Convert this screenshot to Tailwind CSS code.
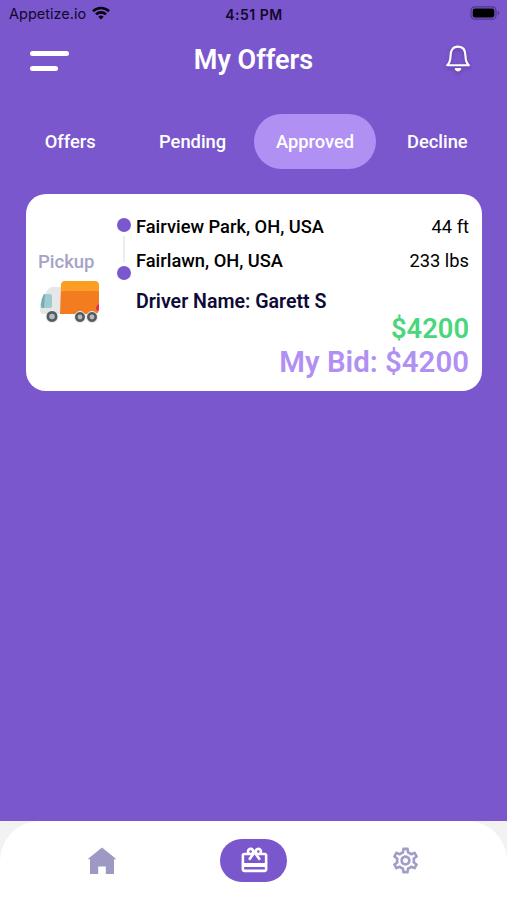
<!DOCTYPE html>
<html lang="en">
<head>
  <meta charset="UTF-8" />
  <meta name="viewport" content="width=device-width, initial-scale=1.0"/>
  <title>My Offers</title>
  <script src="https://cdn.jsdelivr.net/npm/@tailwindcss/browser@4"></script>
</head>
<body class="bg-[#7b57ce] font-['Roboto',sans-serif]">
  <div class="w-[507px] h-[900px] flex flex-col overflow-hidden">

    <!-- Status bar -->
    <div class="h-7 shrink-0 grid grid-cols-3 items-center pl-[8px] pr-[7px] font-['Inter',sans-serif] text-[#10082a] text-sm">
      <div class="flex items-center gap-[6px] pl-px">
        <span class="text-[14.5px]">Appetize.io</span>
        <svg class="w-[18px] h-[14px] -mt-0.5" viewBox="0 0 18 14" fill="none" stroke="#08040f" stroke-width="2.6">
          <path d="M1 5.2a11.5 11.5 0 0 1 16 0"/>
          <path d="M4 8.4a7.2 7.2 0 0 1 10 0"/>
          <path d="M9 13.4 6.3 10.7a3.9 3.9 0 0 1 5.4 0z" fill="#08040f" stroke="none"/>
        </svg>
      </div>
      <span class="text-center font-semibold text-[14px] tracking-[0.5px] pt-px">4:51 PM</span>
      <svg class="w-[30px] h-[14px] justify-self-end -mt-0.5" viewBox="0 0 30 14">
        <rect x="1" y="0.8" width="25" height="12.4" rx="3.8" fill="none" stroke="#4f3789" stroke-width="1.2"/>
        <rect x="2.7" y="2.5" width="21.6" height="9" rx="2.2" fill="#000"/>
        <path d="M27.7 4.8v4.4q1.6-.7 1.6-2.2t-1.6-2.2z" fill="#4f3789"/>
      </svg>
    </div>

    <!-- Header -->
    <header class="h-[64px] shrink-0 flex items-center justify-between pl-[30px] pr-[34px] text-white">
      <div class="w-10 flex flex-col gap-[10px] pt-[2px]">
        <span class="w-[39px] h-[5px] rounded-full bg-white"></span>
        <span class="w-[28px] h-[5px] rounded-full bg-white"></span>
      </div>
      <h1 class="mr-[6px] text-[27px] font-semibold leading-8">My Offers</h1>
      <svg class="w-[30px] h-[32px] -mt-1 drop-shadow-[0_2px_2px_rgba(0,0,0,0.25)]" viewBox="0 0 30 32" fill="none" stroke="#fff" stroke-width="2.1" stroke-linejoin="round" stroke-linecap="round">
        <path d="M4.2 23.3c2.6-2.6 3.3-4.5 3.3-9.3 0-6 2.7-9.4 7.5-9.4s7.5 3.4 7.5 9.4c0 4.8.7 6.7 3.3 9.3z"/>
        <path d="M12.8 27.1q2.2 2.7 4.4 0z" fill="#fff"/>
      </svg>
    </header>

    <!-- Tabs -->
    <nav class="mt-[22px] h-[55px] shrink-0 flex items-stretch pl-[9px] text-white text-[18.3px] font-medium">
      <a class="w-[122.4px] flex items-center justify-center">Offers</a>
      <a class="w-[122.4px] flex items-center justify-center">Pending</a>
      <a class="w-[122.4px] flex items-center justify-center rounded-full bg-[#b190f4]">Approved</a>
      <a class="w-[122.4px] flex items-center justify-center">Decline</a>
    </nav>

    <!-- Offer card -->
    <section class="mt-[25px] ml-[26px] w-[456px] h-[197px] shrink-0 flex rounded-[20px] bg-white pr-[13px] text-black text-[18.3px]">
      <div class="w-[90px] pl-3 pt-[56px]">
        <p class="text-[#a5a3c9] text-[18.5px] font-medium leading-6">Pickup</p>
        <svg class="mt-[7px] ml-[2px] w-[60px] h-[42px]" viewBox="0 0 60 42">
          <path d="M7 10q2-4 6-4h8v27H3q-3 0-3-4v-6z" fill="#e6e7e8"/>
          <path d="M4 13h6q2 0 2 2v10q0 2-2 2H2q-1 0-1-3 0-6 3-11z" fill="#9fcbd0"/>
          <path d="M5 13h-1q-3 5-3 11 0 3 1 3h2z" fill="#72aeb5"/>
          <path d="M21 5q0-5 5-5h28q5 0 5 5v23q0 5-5 5H20z" fill="#f47c20"/>
          <path d="M21 5q0-5 5-5h28q5 0 5 5v6q0-1-4-1H25q-4 0-4 1z" fill="#fb9e24"/>
          <path d="M59 23v5q0 1-1 2-2-.5-2-3t3-4z" fill="#e52b4f"/>
          <g fill="#515c62" stroke="#f2f2f2" stroke-width="1">
            <circle cx="12" cy="35.5" r="6"/>
            <circle cx="40" cy="36" r="5.5"/>
            <circle cx="52" cy="36" r="5.5"/>
          </g>
          <g fill="#b9b9b9">
            <circle cx="12" cy="35.5" r="2.8"/>
            <circle cx="40" cy="36" r="2.4"/>
            <circle cx="52" cy="36" r="2.4"/>
          </g>
        </svg>
      </div>
      <div class="w-[20px] flex flex-col items-start pt-[24px] pl-px">
        <span class="w-[14px] h-[14px] rounded-full bg-[#7b57ce]"></span>
        <span class="my-[4px] ml-[6px] w-[1.5px] h-[26px] bg-[#ececf0]"></span>
        <span class="w-[14px] h-[14px] rounded-full bg-[#7b57ce]"></span>
      </div>
      <div class="flex-1 flex flex-col pt-[21px]">
        <div class="flex justify-between leading-6">
          <span class="font-medium">Fairview Park, OH, USA</span>
          <span>44 ft</span>
        </div>
        <div class="mt-[10px] flex justify-between leading-6">
          <span class="font-medium">Fairlawn, OH, USA</span>
          <span>233 lbs</span>
        </div>
        <p class="mt-[17px] font-semibold leading-6 text-[19.6px] text-[#0d0a35]">Driver Name: Garett S</p>
        <p class="text-right text-[27.3px] leading-[33px] font-semibold text-[#49d67c] -mt-px">$4200</p>
        <p class="text-right text-[29.4px] leading-[33px] font-semibold text-[#b190f4]">My Bid: $4200</p>
      </div>
    </section>

    <!-- Bottom navigation -->
    <div class="mt-auto shrink-0 bg-[#f2f2f2]">
      <footer class="h-[79px] flex items-center justify-center rounded-t-[40px] bg-white">
        <a class="w-[152px] flex justify-center">
          <svg class="w-[30px] h-[28px]" viewBox="0 0 30 28" fill="#9c9ac4">
            <path d="M15 .5 29.5 12.200H27V27h-8.200v-7.500h-7.600V27H3V12.200H.5z"/>
          </svg>
        </a>
        <a class="w-[152px] flex justify-center">
          <span class="w-[67px] h-[43px] rounded-full bg-[#7b57ce] flex items-center justify-center">
            <svg class="w-[31px] h-[31px] ml-px" viewBox="0 0 24 24" fill="#fff">
              <path d="M20 6h-2.180c.11-.31.18-.65.18-1 0-1.660-1.340-3-3-3-1.050 0-1.960.54-2.500 1.350l-.5.67-.5-.68C10.960 2.540 10.050 2 9 2 7.340 2 6 3.340 6 5c0 .35.07.69.18 1H4c-1.110 0-1.990.89-1.990 2L2 19c0 1.110.89 2 2 2h16c1.110 0 2-.89 2-2V8c0-1.110-.89-2-2-2zm-5-2c.55 0 1 .45 1 1s-.45 1-1 1-1-.45-1-1 .45-1 1-1zM9 4c.55 0 1 .45 1 1s-.45 1-1 1-1-.45-1-1 .45-1 1-1zm11 15H4v-2h16v2zm0-5H4V8h5.080L7 10.830 8.620 12 11 8.760l1-1.360 1 1.360L15.380 12 17 10.830 14.920 8H20v6z"/>
            </svg>
          </span>
        </a>
        <a class="w-[152px] flex justify-center">
          <svg class="w-[31px] h-[31px]" viewBox="0 0 24 24" fill="#a09ec6">
            <path d="M19.430 12.980c.04-.32.07-.64.07-.98 0-.34-.03-.66-.07-.98l2.110-1.650c.19-.15.24-.42.12-.64l-2-3.460c-.09-.16-.26-.25-.44-.25-.06 0-.12.01-.17.03l-2.490 1c-.52-.4-1.080-.73-1.690-.98l-.38-2.650C14.460 2.180 14.250 2 14 2h-4c-.25 0-.46.18-.49.42l-.38 2.650c-.61.25-1.170.59-1.690.98l-2.490-1c-.06-.02-.12-.03-.18-.03-.17 0-.34.09-.43.25l-2 3.460c-.13.22-.07.49.12.64l2.110 1.650c-.04.32-.07.65-.07.98 0 .33.03.66.07.98l-2.110 1.650c-.19.15-.24.42-.12.64l2 3.460c.09.16.26.25.44.25.06 0 .12-.01.17-.03l2.490-1c.52.4 1.080.73 1.690.98l.38 2.650c.03.24.24.42.49.42h4c.25 0 .46-.18.49-.42l.38-2.650c.61-.25 1.170-.59 1.690-.98l2.490 1c.06.02.12.03.18.03.17 0 .34-.09.43-.25l2-3.460c.12-.22.07-.49-.12-.64l-2.110-1.650zm-1.980-1.710c.04.31.05.52.05.73 0 .21-.02.43-.05.73l-.14 1.130.89.7 1.080.84-.7 1.210-1.270-.51-1.040-.42-.9.68c-.43.32-.84.56-1.250.73l-1.060.43-.16 1.130-.2 1.350h-1.400l-.19-1.350-.16-1.130-1.060-.43c-.43-.18-.83-.41-1.230-.71l-.91-.7-1.060.43-1.270.51-.7-1.210 1.080-.84.89-.7-.14-1.130c-.03-.31-.05-.54-.05-.74s.02-.43.05-.73l.14-1.130-.89-.7-1.080-.84.7-1.210 1.270.51 1.040.42.9-.68c.43-.32.84-.56 1.250-.73l1.060-.43.16-1.130.2-1.350h1.390l.19 1.350.16 1.130 1.060.43c.43.18.83.41 1.230.71l.91.7 1.060-.43 1.270-.51.7 1.210-1.070.85-.89.7.14 1.130zM12 8c-2.210 0-4 1.790-4 4s1.790 4 4 4 4-1.790 4-4-1.790-4-4-4zm0 6c-1.100 0-2-.9-2-2s.9-2 2-2 2 .9 2 2-.9 2-2 2z"/>
          </svg>
        </a>
      </footer>
    </div>
  </div>
</body>
</html>
